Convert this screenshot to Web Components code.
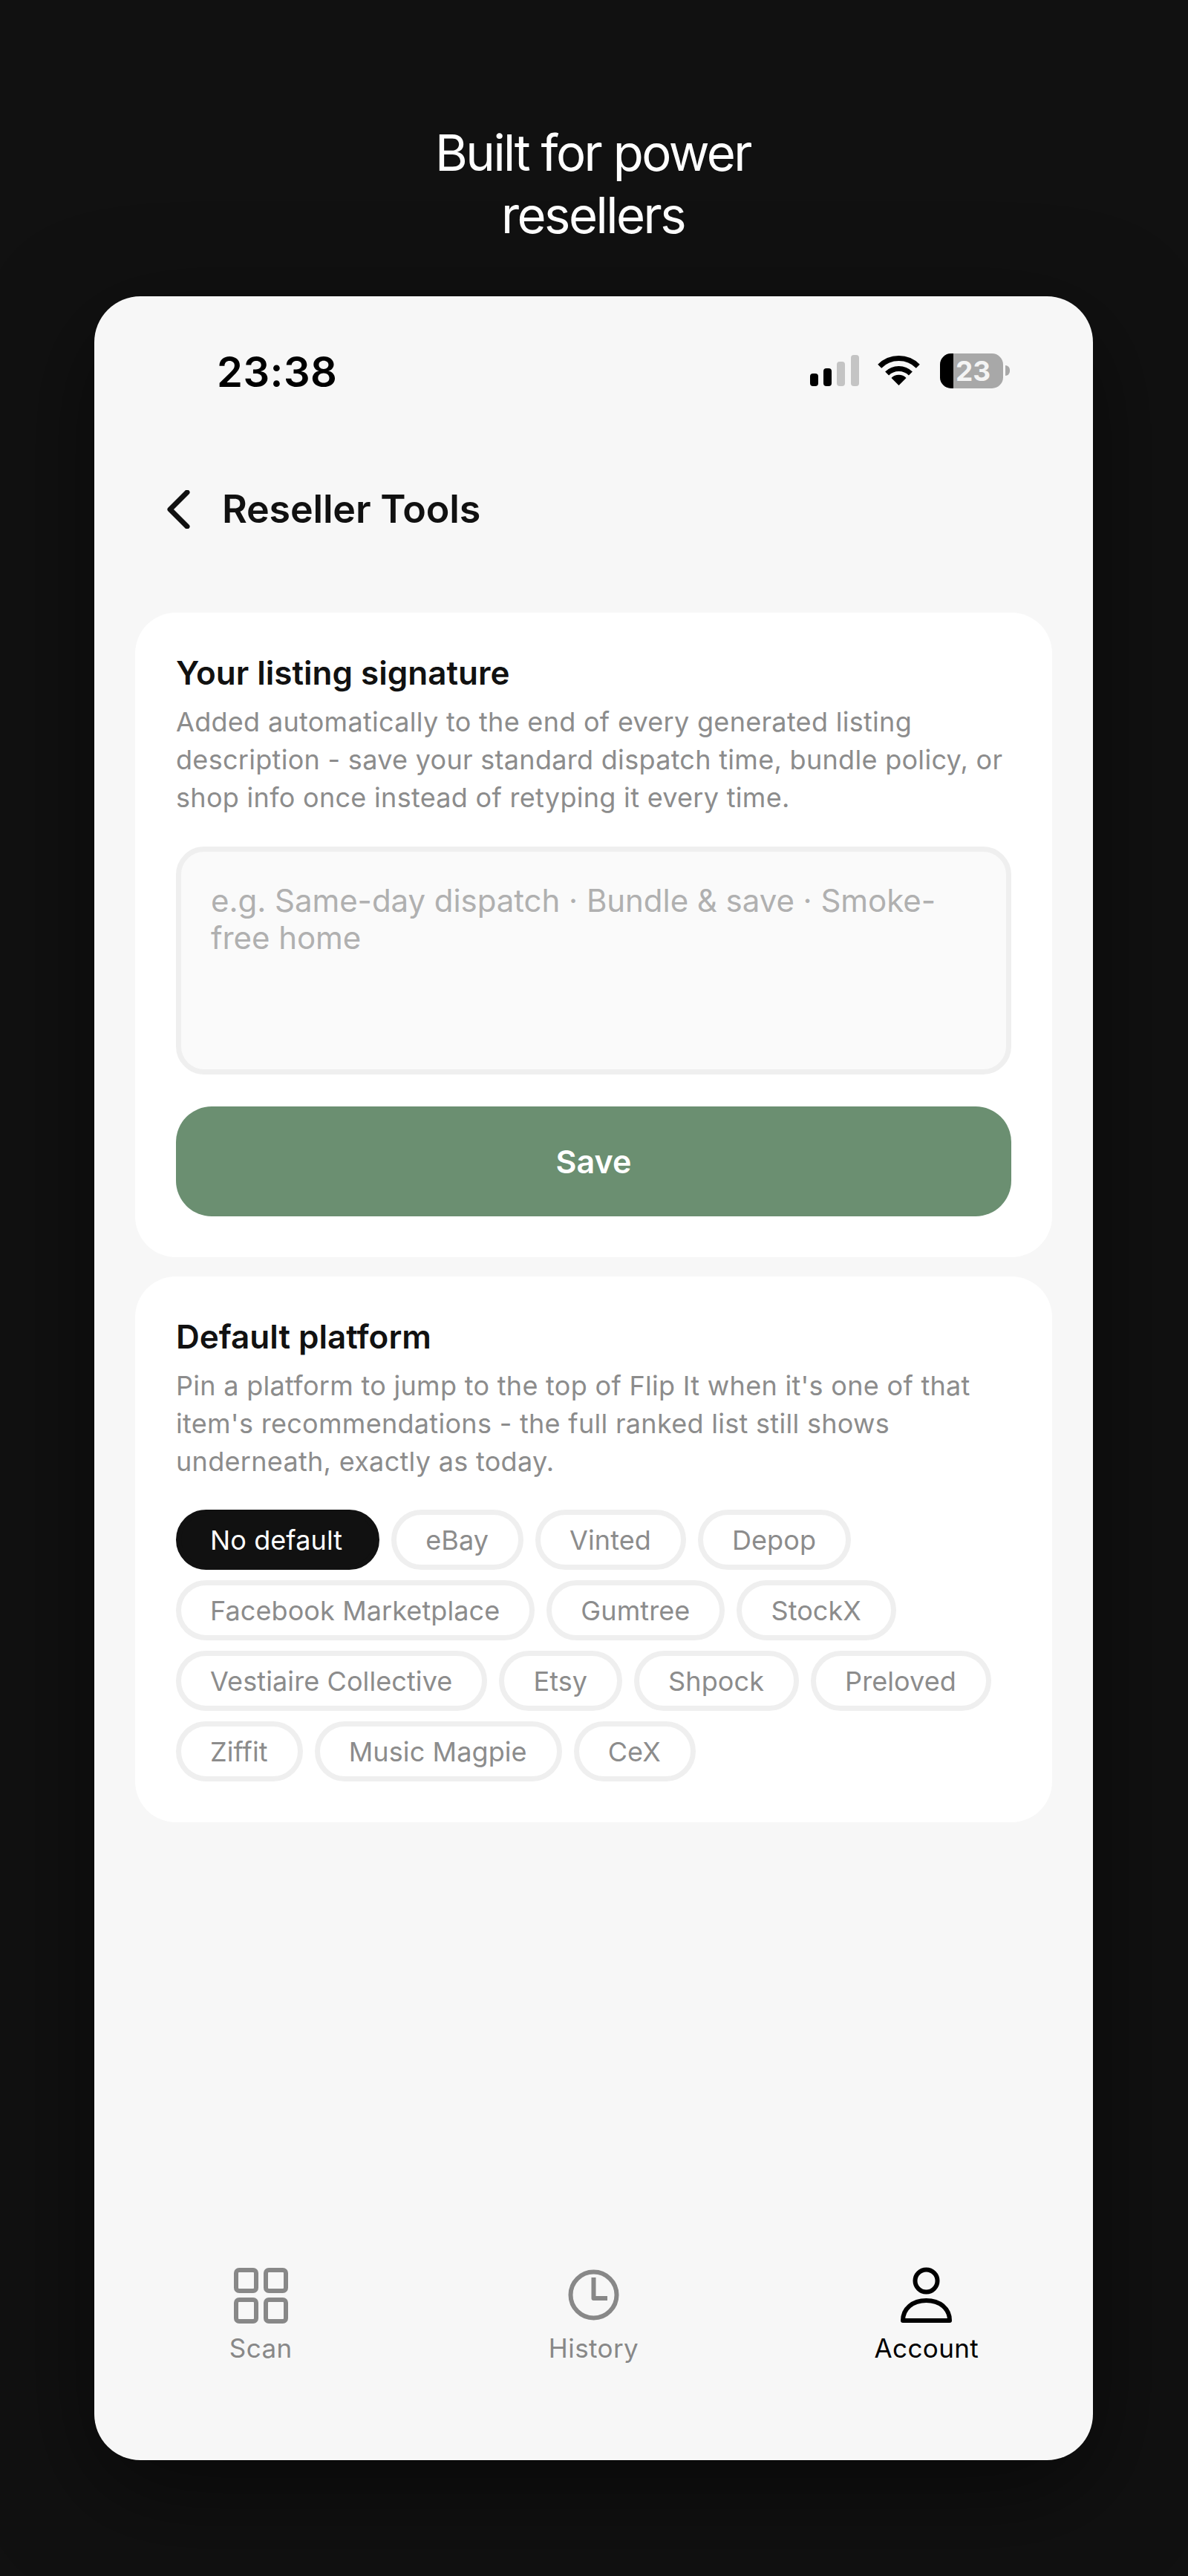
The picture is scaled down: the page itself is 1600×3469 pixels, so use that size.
<!DOCTYPE html>
<html lang="en">
<head>
<meta charset="utf-8">
<title>Reseller Tools</title>
<style>
  html, body { margin: 0; background: #111111; }
  body { font-family: Inter, "Liberation Sans", sans-serif; }
</style>
</head>
<body>
<promo-page>
  <span slot="headline">Built for power<br>resellers</span>
  <status-bar time="23:38" battery="23"></status-bar>
  <nav-header>Reseller Tools</nav-header>
  <tool-card heading="Your listing signature">
    <span slot="desc">Added automatically to the end of every generated listing description - save your standard dispatch time, bundle policy, or shop info once instead of retyping it every time.</span>
    <signature-field>e.g. Same-day dispatch · Bundle &amp; save · Smoke-free home</signature-field>
    <save-button>Save</save-button>
  </tool-card>
  <tool-card heading="Default platform" class="second">
    <span slot="desc">Pin a platform to jump to the top of Flip It when it's one of that item's recommendations - the full ranked list still shows underneath, exactly as today.</span>
    <chip-group>
      <platform-chip active>No default</platform-chip>
      <platform-chip>eBay</platform-chip>
      <platform-chip>Vinted</platform-chip>
      <platform-chip>Depop</platform-chip>
      <platform-chip>Facebook Marketplace</platform-chip>
      <platform-chip>Gumtree</platform-chip>
      <platform-chip>StockX</platform-chip>
      <platform-chip>Vestiaire Collective</platform-chip>
      <platform-chip>Etsy</platform-chip>
      <platform-chip>Shpock</platform-chip>
      <platform-chip>Preloved</platform-chip>
      <platform-chip>Ziffit</platform-chip>
      <platform-chip>Music Magpie</platform-chip>
      <platform-chip>CeX</platform-chip>
    </chip-group>
  </tool-card>
  <tab-bar slot="tabs">
    <tab-item label="Scan" icon="scan"></tab-item>
    <tab-item label="History" icon="history"></tab-item>
    <tab-item label="Account" icon="account" active></tab-item>
  </tab-bar>
</promo-page>

<script>
class PromoPage extends HTMLElement {
  constructor() {
    super();
    this.attachShadow({ mode: "open" });
    this.shadowRoot.innerHTML = `
      <style>
        :host { display: flex; flex-direction: column; align-items: center; box-sizing: border-box; height: 3469px; padding-right: 1px; background: #111111; font-family: Inter, "Liberation Sans", sans-serif; }
        h1 { margin: 0 2px 0 0; padding-top: 164px; height: 399px; box-sizing: border-box; font-size: 67px; line-height: 84px; font-weight: 400; color: #fff; text-align: center; letter-spacing: -2.5px; }
        .phone { width: 1345px; height: 2914px; background: #f7f7f7; border-radius: 62px; display: flex; flex-direction: column; box-shadow: 0 40px 140px rgba(0,0,0,.5); }
        .tabs { margin-top: auto; }
      </style>
      <h1><slot name="headline"></slot></h1>
      <div class="phone">
        <slot></slot>
        <div class="tabs"><slot name="tabs"></slot></div>
      </div>
    `;
  }
}

class StatusBar extends HTMLElement {
  constructor() {
    super();
    this.attachShadow({ mode: "open" });
    this.shadowRoot.innerHTML = `
      <style>
        :host { display: flex; align-items: center; justify-content: space-between; height: 47px; padding: 79px 112px 0 165px; color: #000; }
        .time { font-size: 56px; font-weight: 600; line-height: 47px; letter-spacing: .5px; }
        .icons { display: flex; align-items: center; margin-bottom: 5px; }
        svg { display: block; }
        .wifi { margin-left: 25px; }
        .batt { margin-left: 27px; width: 85px; height: 47px; border-radius: 15px; overflow: hidden; background: #a8a8a8; display: flex; }
        .batt i { display: block; width: 18px; background: #000; }
        .batt span { flex: 1; text-align: center; padding-right: 14px; font-size: 37px; line-height: 47px; font-weight: 700; color: #f4f4f4; }
        .nub { width: 6px; height: 14px; margin-left: 3px; background: #a8a8a8; border-radius: 0 7px 7px 0; }
      </style>
      <span class="time">${this.getAttribute("time")}</span>
      <div class="icons">
        <svg width="66" height="42" viewBox="0 0 66 42">
          <rect x="0" y="25" width="11" height="17" rx="4" fill="#000"/>
          <rect x="18" y="18" width="11" height="24" rx="4" fill="#000"/>
          <rect x="36" y="9" width="11" height="33" rx="4" fill="#c4c4c4"/>
          <rect x="55" y="0" width="11" height="42" rx="4" fill="#c4c4c4"/>
        </svg>
        <svg class="wifi" width="57" height="42" viewBox="0 0 57 42">
          <path d="M2.7 15.2A36.5 36.5 0 0 1 54.3 15.2" fill="none" stroke="#000" stroke-width="7"/>
          <path d="M12.6 25.1A22.5 22.5 0 0 1 44.4 25.1" fill="none" stroke="#000" stroke-width="7"/>
          <path d="M28.5 41L18.5 31A14 14 0 0 1 38.5 31Z" fill="#000"/>
        </svg>
        <div class="batt"><i></i><span>${this.getAttribute("battery")}</span></div>
        <div class="nub"></div>
      </div>
    `;
  }
}

class NavHeader extends HTMLElement {
  constructor() {
    super();
    this.attachShadow({ mode: "open" });
    this.shadowRoot.innerHTML = `
      <style>
        :host { display: flex; align-items: center; height: 60px; margin-top: 131px; margin-bottom: 109px; padding-left: 97px; }
        svg { display: block; margin-right: 43px; }
        span { font-size: 52px; font-weight: 600; color: #111; line-height: 60px; letter-spacing: -.2px; }
      </style>
      <svg width="32" height="52" viewBox="0 0 32 52"><path d="M28 3L5 26L28 49" fill="none" stroke="#111" stroke-width="7" stroke-linecap="round" stroke-linejoin="round"/></svg>
      <span><slot></slot></span>
    `;
  }
}

class ToolCard extends HTMLElement {
  constructor() {
    super();
    this.attachShadow({ mode: "open" });
    this.shadowRoot.innerHTML = `
      <style>
        :host { display: block; margin: 0 55px 26px; padding: 55px 55px 55px; background: #fff; border-radius: 55px; }
        h2 { margin: 0 0 15px; font-size: 44px; line-height: 52px; font-weight: 600; color: #111; }
        .desc { font-size: 36px; line-height: 51px; letter-spacing: .3px; color: #8c8c8c; margin-bottom: 40px; }
      </style>
      <h2>${this.getAttribute("heading")}</h2>
      <div class="desc"><slot name="desc"></slot></div>
      <slot></slot>
    `;
  }
}

class SignatureField extends HTMLElement {
  constructor() {
    super();
    this.attachShadow({ mode: "open" });
    this.shadowRoot.innerHTML = `
      <style>
        :host { display: block; box-sizing: border-box; height: 307px; padding: 41px 40px; background: #fafafa; border: 7px solid #efefef; border-radius: 38px; font-size: 42px; line-height: 50px; letter-spacing: -.05px; color: #b0b0b0; }
      </style>
      <slot></slot>
    `;
  }
}

class SaveButton extends HTMLElement {
  constructor() {
    super();
    this.attachShadow({ mode: "open" });
    this.shadowRoot.innerHTML = `
      <style>
        :host { display: flex; align-items: center; justify-content: center; height: 148px; margin-top: 43px; background: #6b8f71; border-radius: 48px; color: #fff; font-size: 43px; font-weight: 600; }
      </style>
      <slot></slot>
    `;
  }
}

class ChipGroup extends HTMLElement {
  constructor() {
    super();
    this.attachShadow({ mode: "open" });
    this.shadowRoot.innerHTML = `
      <style>
        :host { display: flex; flex-wrap: wrap; gap: 14px 16px; margin-top: -1px; }
      </style>
      <slot></slot>
    `;
  }
}

class PlatformChip extends HTMLElement {
  constructor() {
    super();
    this.attachShadow({ mode: "open" });
    this.shadowRoot.innerHTML = `
      <style>
        :host { display: flex; align-items: center; box-sizing: border-box; height: 81px; padding: 0 40px 0 39px; border: 7px solid #efefef; border-radius: 41px; font-size: 36px; letter-spacing: .1px; color: #8c8c8c; background: #fff; }
        :host([active]) { background: #111; border-color: #111; color: #fff; padding-right: 43px; }
      </style>
      <slot></slot>
    `;
  }
}

class TabBar extends HTMLElement {
  constructor() {
    super();
    this.attachShadow({ mode: "open" });
    this.shadowRoot.innerHTML = `
      <style>
        :host { display: grid; grid-template-columns: repeat(3, 1fr); height: 260px; }
      </style>
      <slot></slot>
    `;
  }
}

const TAB_ICONS = {
  scan: `<rect x="5" y="4" width="27" height="28" rx="4"/><rect x="45" y="4" width="27" height="28" rx="4"/><rect x="5" y="44" width="27" height="29" rx="4"/><rect x="45" y="44" width="27" height="29" rx="4"/>`,
  history: `<circle cx="38.5" cy="37.5" r="31"/><path d="M38.5 14V42H57"/>`,
  account: `<circle cx="38.5" cy="18.5" r="15"/><path d="M7 72C7 56 20 45 38.5 45S70 56 70 72Z"/>`,
};

class TabItem extends HTMLElement {
  constructor() {
    super();
    this.attachShadow({ mode: "open" });
    const color = this.hasAttribute("active") ? "#000" : "#888";
    this.shadowRoot.innerHTML = `
      <style>
        :host { display: flex; flex-direction: column; align-items: center; color: ${color}; font-size: 35px; line-height: 42px; letter-spacing: .4px; }
        svg { display: block; margin-bottom: 11px; }
      </style>
      <svg width="77" height="77" viewBox="0 0 77 77" fill="none" stroke="${color}" stroke-width="6" stroke-linejoin="round">${TAB_ICONS[this.getAttribute("icon")]}</svg>
      <span>${this.getAttribute("label")}</span>
    `;
  }
}

customElements.define("promo-page", PromoPage);
customElements.define("status-bar", StatusBar);
customElements.define("nav-header", NavHeader);
customElements.define("tool-card", ToolCard);
customElements.define("signature-field", SignatureField);
customElements.define("save-button", SaveButton);
customElements.define("chip-group", ChipGroup);
customElements.define("platform-chip", PlatformChip);
customElements.define("tab-bar", TabBar);
customElements.define("tab-item", TabItem);
</script>
</body>
</html>
